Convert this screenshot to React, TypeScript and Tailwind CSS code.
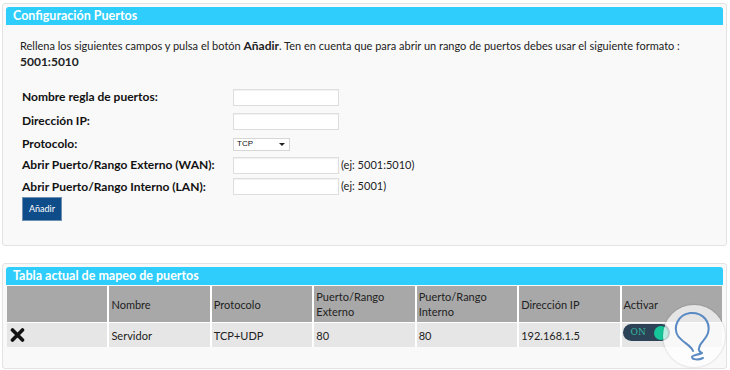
import React from "react";

const FONT = { fontFamily: "Lato, 'Open Sans', sans-serif" };

const FIELDS = [
  { label: "Nombre regla de puertos:", h: "h-[22px]" },
  { label: "Dirección IP:", h: "h-[22px]" },
];

const COLUMNS = [
  "",
  "Nombre",
  "Protocolo",
  "Puerto/Rango Externo",
  "Puerto/Rango Interno",
  "Dirección IP",
  "Activar",
];

function PanelHeader({ title }: { title: string }) {
  return (
    <div className="h-[18px] bg-[#2ecdfb] rounded-t-[3px] px-[7px] flex items-center">
      <span className="text-white font-bold text-[12.5px] leading-none">{title}</span>
    </div>
  );
}

function TextInput() {
  return (
    <div className="w-[106px] h-[17px] bg-white border border-[#dedede] shadow-[inset_0_1px_1px_rgba(0,0,0,0.06)]" />
  );
}

function DeleteIcon() {
  return (
    <svg width="15" height="14" viewBox="0 0 15 14" aria-hidden>
      <path d="M2.5 2 L12.5 12 M12.5 2 L2.5 12" stroke="#111" strokeWidth="3.6" strokeLinecap="round" />
    </svg>
  );
}

function Toggle() {
  return (
    <div className="w-[47px] h-[17px] rounded-full bg-[#2b4257] flex items-center justify-between pl-[8px] pr-[2px]">
      <span className="text-[9px] leading-none text-[#38b49e]" style={{ fontFamily: "'DejaVu Serif', serif" }}>
        ON
      </span>
      <span className="w-[14px] h-[14px] rounded-full bg-[#17c59b]" />
    </div>
  );
}

function Watermark() {
  return (
    <div className="absolute left-[663px] top-[305px] w-[62px] h-[62px] rounded-full bg-white/70 shadow-[0_0_2px_rgba(0,0,0,0.25)]">
      <svg width="62" height="62" viewBox="0 0 62 62" aria-hidden>
        <path
          d="M30 46 C28 40 20 38 15 31 C10 23 14 10 27 8 C40 7 48 17 45 28 C43 35 37 37 36 43 C35 46 37 47 39 48 C35 50 29 50 29 52 C29 55 36 55 40 53"
          fill="none"
          stroke="#5a8ac4"
          strokeWidth="2"
          strokeLinecap="round"
          strokeLinejoin="round"
        />
      </svg>
    </div>
  );
}

export default function App() {
  return (
    <div className="relative w-[730px] h-[370px] bg-white text-[#222] overflow-hidden" style={FONT}>
      {/* Configuración */}
      <div className="ml-[2px] mt-[3px] w-[725px] h-[243px] border border-[#e3e3e3] rounded-[3px] bg-[#f9f9f9] p-[3px]">
        <PanelHeader title="Configuración Puertos" />
        <div className="pl-[14px] pt-[13px] text-[11px] leading-[16px]">
          <p>
            Rellena los siguientes campos y pulsa el botón <b className="text-[12px]">Añadir</b>. Ten en cuenta que para
            abrir un rango de puertos debes usar el siguiente formato :
          </p>
          <p className="font-bold text-[12px]">5001:5010</p>
        </div>

        <div className="pl-[16px] mt-[16px] text-[12px] font-bold text-[#111]">
          {FIELDS.map((f) => (
            <div key={f.label} className={`flex items-center ${f.h} mb-[2px]`}>
              <span className="w-[211px]">{f.label}</span>
              <TextInput />
            </div>
          ))}
          <div className="flex items-center h-[20px]">
            <span className="w-[211px]">Protocolo:</span>
            <div className="w-[57px] h-[13px] bg-white border border-[#d6d6d6] flex items-center justify-between pl-[3px] pr-[4px]">
              <span className="text-[8px] font-normal leading-none" style={{ fontFamily: "'Liberation Sans', sans-serif" }}>
                TCP
              </span>
              <span className="w-0 h-0 border-l-[3px] border-r-[3px] border-t-[3px] border-l-transparent border-r-transparent border-t-[#222]" />
            </div>
          </div>
          <div className="flex items-center h-[22px]">
            <span className="w-[211px]">Abrir Puerto/Rango Externo (WAN):</span>
            <TextInput />
            <span className="ml-[2px] font-normal text-[11px] text-[#222]">(ej: 5001:5010)</span>
          </div>
          <div className="flex items-center h-[21px]">
            <span className="w-[211px]">Abrir Puerto/Rango Interno (LAN):</span>
            <TextInput />
            <span className="ml-[2px] font-normal text-[11px] text-[#222]">(ej: 5001)</span>
          </div>
          <button className="w-[40px] h-[24px] bg-[#0e4c8a] border border-[#6f8fb0] text-white text-[9px] font-normal">
            Añadir
          </button>
        </div>
      </div>

      {/* Tabla */}
      <div className="ml-[2px] mt-[17px] w-[725px] h-[106px] border border-[#e3e3e3] rounded-[3px] bg-[#f9f9f9] p-[3px]">
        <PanelHeader title="Tabla actual de mapeo de puertos" />
        <div className="mx-px mt-px grid grid-cols-7 gap-x-[2px] gap-y-px bg-white text-[11px] text-[#222]">
          {COLUMNS.map((c) => (
            <div key={c || "x"} className="h-[36px] bg-[#a8a8a8] px-[2px] flex items-center leading-[15px]">
              <span className="max-w-[80px]">{c}</span>
            </div>
          ))}
          <div className="h-[24px] bg-[#e6e6e6] pl-[3px] flex items-center">
            <DeleteIcon />
          </div>
          {["Servidor", "TCP+UDP", "80", "80", "192.168.1.5"].map((v, i) => (
            <div key={i} className="h-[24px] bg-[#e6e6e6] px-[2px] flex items-center pt-[2px]">
              {v}
            </div>
          ))}
          <div className="h-[24px] bg-[#e6e6e6] pl-[1px] flex items-start pt-[1px]">
            <Toggle />
          </div>
        </div>
      </div>

      <Watermark />
    </div>
  );
}
